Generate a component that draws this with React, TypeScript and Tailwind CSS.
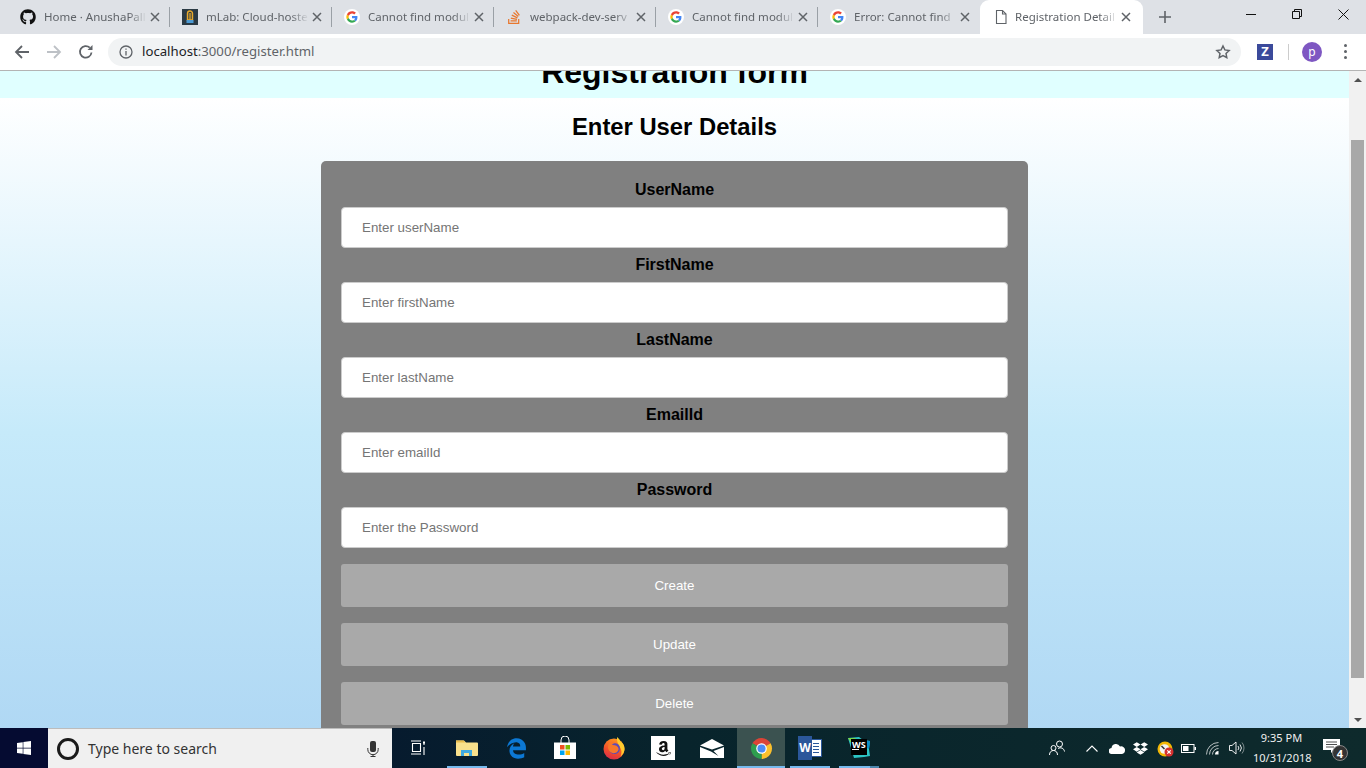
import React from "react";
import { FaGithub, FaStackOverflow, FaWindows, FaAmazon, FaDropbox, FaEdgeLegacy } from "react-icons/fa";

const sans = "font-['Noto_Sans','Open_Sans',sans-serif]";

function GoogleG({ size = 16 }: { size?: number }) {
  return (
    <svg width={size} height={size} viewBox="0 0 48 48">
      <circle cx="24" cy="24" r="24" fill="#fff" />
      <g transform="translate(7 7) scale(0.71)">
        <path fill="#EA4335" d="M24 9.5c3.5 0 6.700 1.200 9.200 3.600l6.900-6.900C35.900 2.400 30.400 0 24 0 14.600 0 6.500 5.400 2.600 13.200l8 6.200C12.500 13.700 17.800 9.500 24 9.500z" />
        <path fill="#4285F4" d="M46.900 24.500c0-1.600-.2-3.100-.4-4.500H24v9h12.900c-.6 3-2.200 5.500-4.700 7.200l7.700 6c4.500-4.200 7-10.300 7-17.700z" />
        <path fill="#FBBC05" d="M10.500 28.600c-.5-1.400-.8-3-.8-4.600s.3-3.200.8-4.600l-8-6.200C.9 16.400 0 20.100 0 24s.9 7.600 2.600 10.800l7.900-6.200z" />
        <path fill="#34A853" d="M24 48c6.500 0 11.900-2.100 15.900-5.800l-7.700-6c-2.200 1.400-4.900 2.300-8.200 2.300-6.200 0-11.500-4.200-13.400-9.900l-8 6.200C6.500 42.600 14.600 48 24 48z" />
      </g>
    </svg>
  );
}

function MLabIcon() {
  return (
    <svg width="16" height="16" viewBox="0 0 16 16">
      <rect width="16" height="16" fill="#2b3a44" />
      <path d="M5.500 11V4.500a2.500 2.500 0 0 1 5 0V11z" fill="none" stroke="#e8a92c" strokeWidth="1.400" />
      <path d="M7.300 4v7M8.700 4v7" stroke="#e8a92c" strokeWidth="0.800" />
      <rect x="4.500" y="11" width="7" height="3" fill="#4c9ad4" />
    </svg>
  );
}

function PageIcon() {
  return (
    <svg width="16" height="16" viewBox="0 0 16 16" fill="none" stroke="#5f6368" strokeWidth="1.100">
      <path d="M3.500 1.500h6l3.500 3.500v9.500h-9.500z" />
      <path d="M9.500 1.500v3.500h3.500" />
    </svg>
  );
}

function CloseX({ color = "#5f6368" }: { color?: string }) {
  return (
    <svg width="10" height="10" viewBox="0 0 10 10" stroke={color} strokeWidth="1.500" fill="none">
      <path d="M1 1l8 8M9 1l-8 8" />
    </svg>
  );
}

const tabs: { icon: React.ReactNode; title: string }[] = [
  { icon: <FaGithub size={16} color="#111" />, title: "Home · AnushaPall" },
  { icon: <MLabIcon />, title: "mLab: Cloud-hoste" },
  { icon: <GoogleG />, title: "Cannot find modul" },
  { icon: <FaStackOverflow size={16} color="#e8772e" />, title: "webpack-dev-serv" },
  { icon: <GoogleG />, title: "Cannot find modul" },
  { icon: <GoogleG />, title: "Error: Cannot find" },
];

function Tab({ icon, title, last }: { icon: React.ReactNode; title: string; last: boolean }) {
  return (
    <div className="flex items-center w-[162px] h-[34px] shrink-0">
      <div className="w-4 h-4 ml-[11px] shrink-0 flex items-center justify-center">{icon}</div>
      <div className={`ml-2 w-[106px] whitespace-nowrap overflow-hidden text-[11.5px] text-[#5f6368] [mask-image:linear-gradient(to_right,black_80%,transparent_97%)] ${sans}`}>
        {title}
      </div>
      <div className="w-[10px] shrink-0 flex items-center">
        <CloseX />
      </div>
      <div className="flex-1" />
      <div className={`w-px h-[20px] mr-[1px] shrink-0 ${last ? "bg-transparent" : "bg-[#9aa0a6]"}`} />
    </div>
  );
}

function TabStrip() {
  return (
    <div className="flex h-[34px] bg-[#dee1e6] shrink-0 items-start">
      <div className="w-[9px] shrink-0" />
      {tabs.map((t, i) => (
        <Tab key={i} icon={t.icon} title={t.title} last={i === tabs.length - 1} />
      ))}
      <div className="w-[163px] h-[34px] -ml-[1px] mt-0 bg-white rounded-t-[9px] flex items-center shrink-0">
        <div className="ml-[13px] w-4 h-4 shrink-0"><PageIcon /></div>
        <div className={`ml-[6px] w-[106px] whitespace-nowrap overflow-hidden text-[11.5px] text-[#5f6368] [mask-image:linear-gradient(to_right,black_80%,transparent_97%)] ${sans}`}>
          Registration Detail
        </div>
        <div><CloseX /></div>
      </div>
      <div className="ml-[16px] h-[34px] flex items-center">
        <svg width="12" height="12" viewBox="0 0 12 12" stroke="#5f6368" strokeWidth="1.600"><path d="M6 0v12M0 6h12" /></svg>
      </div>
      <div className="flex-1" />
      <div className="flex h-[28px] items-center">
        <div className="w-[46px] flex justify-center">
          <svg width="10" height="10" viewBox="0 0 10 10" stroke="#111" strokeWidth="1"><path d="M0 5.500h10" /></svg>
        </div>
        <div className="w-[46px] flex justify-center">
          <svg width="10" height="10" viewBox="0 0 10 10" stroke="#111" strokeWidth="1" fill="none"><path d="M.5 2.500h7v7h-7zM2.500 2.500v-2h7v7h-2" /></svg>
        </div>
        <div className="w-[46px] flex justify-center">
          <svg width="11" height="11" viewBox="0 0 11 11" stroke="#111" strokeWidth="1"><path d="M.5.500l10 10M10.500.500l-10 10" /></svg>
        </div>
      </div>
    </div>
  );
}

function Toolbar() {
  return (
    <div className="flex items-center h-[37px] bg-white border-b border-[#b4b4b4] shrink-0 pb-[1px]">
      <div className="w-[44px] flex justify-center">
        <svg width="16" height="16" viewBox="0 0 16 16" stroke="#5f6368" strokeWidth="1.800" fill="none"><path d="M15 8H2M8 2L2 8l6 6" /></svg>
      </div>
      <div className="w-[20px] flex justify-center">
        <svg width="16" height="16" viewBox="0 0 16 16" stroke="#bdc1c6" strokeWidth="1.800" fill="none"><path d="M1 8h13M8 2l6 6-6 6" /></svg>
      </div>
      <div className="w-[44px] flex justify-center">
        <svg width="16" height="16" viewBox="0 0 16 16" stroke="#5f6368" strokeWidth="1.800" fill="none"><path d="M13.500 8.500A5.800 5.800 0 1 1 11.800 3.700" /><path d="M14.500 1v5h-5" fill="#5f6368" stroke="none" /></svg>
      </div>
      <div className="w-[1133px] h-[28px] bg-[#f1f3f4] rounded-full flex items-center">
        <div className="ml-[11px] w-[14px] h-[14px]">
          <svg width="14" height="14" viewBox="0 0 14 14" fill="none" stroke="#5f6368" strokeWidth="1.300"><circle cx="7" cy="7" r="6" /><path d="M7 6v4.500M7 3.500v1.300" /></svg>
        </div>
        <div className={`ml-[9px] text-[13.2px] leading-none whitespace-nowrap ${sans}`}>
          <span className="text-[#202124]">localhost</span><span className="text-[#5f6368]">:3000/register.html</span>
        </div>
        <div className="flex-1" />
        <div className="mr-[10px]">
          <svg width="16" height="16" viewBox="0 0 24 24" fill="none" stroke="#5f6368" strokeWidth="2.200"><path d="M12 3l2.800 5.900 6.400.8-4.700 4.400 1.200 6.400-5.700-3.200-5.700 3.200 1.200-6.400-4.700-4.400 6.400-.8z" /></svg>
        </div>
      </div>
      <div className={`ml-[16px] w-4 h-4 bg-[#3b4a9b] flex items-center justify-center text-white text-[13px] font-bold leading-none ${sans}`}>Z</div>
      <div className="ml-[15px] w-px h-[16px] bg-[#ccc]" />
      <div className={`ml-[13px] w-5 h-5 rounded-full bg-[#7e57c2] flex items-center justify-center text-white text-[12px] leading-none ${sans}`}>p</div>
      <div className="ml-[22px] flex flex-col gap-[3px]">
        <div className="w-[3px] h-[3px] rounded-full bg-[#5f6368]" />
        <div className="w-[3px] h-[3px] rounded-full bg-[#5f6368]" />
        <div className="w-[3px] h-[3px] rounded-full bg-[#5f6368]" />
      </div>
    </div>
  );
}

function Field({ label, ph }: { label: string; ph: string }) {
  return (
    <div className="flex flex-col">
      <label className="h-[18px] mb-[8px] text-center text-[16px] leading-[18px] font-bold text-black">{label}</label>
      <input
        readOnly
        placeholder={ph}
        className="h-[41px] mb-[8px] w-full bg-white border border-[#ccc] rounded-[4px] pl-[20px] text-[13.33px] placeholder:text-[#757575] outline-none"
      />
    </div>
  );
}

function Form() {
  return (
    <div className="flex-1 min-w-0 h-full overflow-hidden font-['Liberation_Sans',Arial,sans-serif] bg-gradient-to-b from-white from-[4%] via-[#c6eafa] via-[55%] to-[#b0d8f4]">
      <div className="h-[27px] bg-[#e0ffff] flex items-end justify-center pb-[7px]">
        <h1 className="text-[32px] leading-[37px] font-bold text-black whitespace-nowrap shrink-0">Registration form</h1>
      </div>
      <h2 className="mt-[15px] h-[28px] text-center text-[23.8px] leading-[28px] font-bold text-black">Enter User Details</h2>
      <div className="mx-auto mt-[20px] w-[707px] bg-[#808080] rounded-[5px] px-5 pt-[20px] pb-5">
        <Field label="UserName" ph="Enter userName" />
        <Field label="FirstName" ph="Enter firstName" />
        <Field label="LastName" ph="Enter lastName" />
        <Field label="EmailId" ph="Enter emailId" />
        <Field label="Password" ph="Enter the Password" />
        <div className="mt-[8px] flex flex-col gap-4">
          {["Create", "Update", "Delete"].map((b) => (
            <button key={b} className="h-[43px] w-full bg-[#a9a9a9] rounded-[3px] text-white text-[13.33px] font-normal">
              {b}
            </button>
          ))}
        </div>
      </div>
    </div>
  );
}

function Scrollbar() {
  return (
    <div className="w-[17px] h-full bg-[#f1f1f1] flex flex-col items-center shrink-0">
      <div className="h-[17px] flex items-center justify-center shrink-0">
        <div className="w-0 h-0 border-x-[4px] border-x-transparent border-b-[4px] border-b-[#505050]" />
      </div>
      <div className="mt-[52px] w-[13px] h-[538px] bg-[#a8a8a8] shrink-0" />
      <div className="flex-1" />
      <div className="h-[17px] flex items-center justify-center shrink-0">
        <div className="w-0 h-0 border-x-[4px] border-x-transparent border-t-[4px] border-t-[#505050]" />
      </div>
    </div>
  );
}

function Slot({ children, active, bar, extra }: { children: React.ReactNode; active?: boolean; bar?: boolean; extra?: boolean }) {
  return (
    <div className={`relative w-[48px] h-[40px] flex items-center justify-center shrink-0 ${active ? "bg-[#3b5250]" : ""}`}>
      {children}
      {bar && <div className={`absolute bottom-0 h-[2px] bg-[#76b9ed] ${active ? "left-0 right-0" : "left-[4px] right-[4px]"}`} />}
      {extra && <div className="absolute bottom-0 right-[4px] w-[9px] h-[2px] bg-[#4c86ad]" />}
    </div>
  );
}

function Firefox() {
  return (
    <svg width="24" height="24" viewBox="0 0 24 24">
      <defs>
        <linearGradient id="ffx" x1="0.7" y1="0" x2="0.3" y2="1">
          <stop offset="0" stopColor="#ff9a1f" />
          <stop offset="0.6" stopColor="#f2502a" />
          <stop offset="1" stopColor="#d92b4a" />
        </linearGradient>
      </defs>
      <circle cx="12" cy="13" r="10.500" fill="url(#ffx)" />
      <path d="M15 1c2 1.500 3 3 3.500 4.500C21 7.500 23 10 22.500 14c-.5 3-2 5-4 6.500 1.500-3 1.500-7-1-10C16 8 14.500 5 15 1z" fill="#ffcb2e" />
      <circle cx="12.500" cy="12.500" r="5.500" fill="#5b4bb8" />
      <path d="M7 7c2-1.500 5-1.500 7 0-2 0-3.500.8-4 2 2.500-.3 6 .5 6.500 3.500.4 3-3 5.500-6 4.500C8 16.500 6 14 6 11.500c0-1.700.4-3.300 1-4.500z" fill="#f7782a" />
    </svg>
  );
}

function Taskbar() {
  return (
    <div className="h-[40px] shrink-0 flex items-center text-white bg-gradient-to-r from-[#060c30] via-[#08242c] to-[#0e2a2c]">
      <div className="w-[48px] h-full flex items-center justify-center bg-[#050b31]">
        <FaWindows size={16} color="#fff" />
      </div>
      <div className="w-[344px] h-full bg-[#f0f0f0] border-t border-[#bcbcbc] flex items-center">
        <div className="ml-[9px] w-[22px] h-[22px] rounded-full border-[3px] border-[#1a1a1a]" />
        <div className={`ml-[9px] text-[14px] text-[#333] whitespace-nowrap ${sans}`}>Type here to search</div>
        <div className="flex-1" />
        <svg className="mr-[13px]" width="12" height="16" viewBox="0 0 12 16" fill="none">
          <rect x="3" y="0" width="6" height="11" rx="2" fill="#333" />
          <path d="M.8 7v1.500a5.200 5.200 0 0 0 10.400 0V7M6 13.500V16M3.500 15.500h5" stroke="#333" strokeWidth="1" />
        </svg>
      </div>
      <div className="ml-[2px] flex gap-px">
        <Slot>
          <svg width="16" height="16" viewBox="0 0 16 16" fill="none" stroke="#fff" strokeWidth="1.100">
            <path d="M1 1h10M1 14h10M2.500 3.500h8v8h-8zM14 3v2M14 7v8" />
            <rect x="13" y="1.500" width="2" height="2" fill="#fff" stroke="none" />
          </svg>
        </Slot>
        <Slot bar>
          <svg width="22" height="20" viewBox="0 0 22 20">
            <path d="M0 2.500h8l2 2h11a1 1 0 0 1 1 1V17a1 1 0 0 1-1 1H1a1 1 0 0 1-1-1z" fill="#f9e08c" />
            <path d="M0 2.500h7.500l2 2H0z" fill="#e9bc4c" />
            <path d="M5 18v-6h11v6h-3v-3H8v3z" fill="#3fa9e0" />
          </svg>
        </Slot>
        <Slot>
          <FaEdgeLegacy size={21} color="#0c78d4" />
        </Slot>
        <Slot>
          <svg width="24" height="24" viewBox="0 0 24 24">
            <path d="M8 7V4a4 4 0 0 1 8 0v3" fill="none" stroke="#fff" strokeWidth="1" />
            <path d="M1 6.500h22V23H1z" fill="#fff" />
            <rect x="7" y="9" width="4.500" height="4.500" fill="#f25022" />
            <rect x="12.500" y="9" width="4.500" height="4.500" fill="#7fba00" />
            <rect x="7" y="14.500" width="4.500" height="4.500" fill="#00a4ef" />
            <rect x="12.500" y="14.500" width="4.500" height="4.500" fill="#ffb900" />
          </svg>
        </Slot>
        <Slot>
          <Firefox />
        </Slot>
        <Slot>
          <div className="w-6 h-6 bg-white flex items-center justify-center">
            <FaAmazon size={17} color="#111" />
          </div>
        </Slot>
        <Slot>
          <svg width="24" height="19" viewBox="0 0 24 19">
            <path d="M0 6.500L12 0l12 6.500-12 4z" fill="#fff" />
            <path d="M0 8v11h24V8L13.500 12l5 5L11 12.500z" fill="#fff" />
          </svg>
        </Slot>
        <Slot active bar>
          <svg width="23" height="23" viewBox="0 0 48 48">
            <path d="M24 24L5 13A22 22 0 0 1 43 13z" fill="#db4437" />
            <path d="M24 24L43 13A22 22 0 0 1 24 46z" fill="#fbc02d" />
            <path d="M24 24L24 46A22 22 0 0 1 5 13z" fill="#2e9e4f" />
            <circle cx="24" cy="24" r="11" fill="#fff" />
            <circle cx="24" cy="24" r="8.500" fill="#4c8bf5" />
          </svg>
        </Slot>
        <Slot bar>
          <div className="relative w-6 h-6">
            <div className="absolute left-[8px] top-[3px] w-[16px] h-[18px] bg-white border border-[#2b579a] flex flex-col justify-center gap-[2px] pl-[6px] pr-[2px]">
              <div className="h-px bg-[#2b579a]" /><div className="h-px bg-[#2b579a]" /><div className="h-px bg-[#2b579a]" /><div className="h-px bg-[#2b579a]" />
            </div>
            <div className={`absolute left-0 top-0 w-[14px] h-[24px] bg-[#2b579a] flex items-center justify-center text-[12px] font-bold leading-none ${sans}`}>W</div>
          </div>
        </Slot>
        <Slot bar extra>
          <div className="relative w-6 h-6">
            <svg className="absolute inset-0" width="24" height="24" viewBox="0 0 24 24">
              <path d="M1 2l11-1 4 3 7 1-1 8 1 7-6 1-10 1z" fill="#2dc4c4" />
              <path d="M16 4l7 1-1 8-4-2z" fill="#0d8ec9" />
              <path d="M1 2l8 0-5 5z" fill="#7bd648" />
            </svg>
            <div className="absolute left-[4px] top-[3px] w-[16px] h-[16px] bg-black text-white text-[9px] font-bold leading-[11px] pl-[1px]">WS
              <div className="mt-[-1px] w-[7px] h-px bg-white" />
            </div>
          </div>
        </Slot>
      </div>
      <div className="flex-1" />
      <div className="flex items-center h-full">
        <svg className="mr-[21px]" width="16" height="16" viewBox="0 0 16 16" fill="none" stroke="#fff" strokeWidth="1">
          <circle cx="10.500" cy="4" r="3" /><circle cx="4.500" cy="8" r="2.500" /><path d="M.5 15c0-3 1.800-4.500 4-4.500s4 1.500 4 4.500M9 8.500c2.500-1.500 6-.5 6.500 3" />
        </svg>
        <svg className="mr-[11px]" width="12" height="7" viewBox="0 0 12 7" fill="none" stroke="#fff" strokeWidth="1.100"><path d="M.5 6.500L6 1l5.500 5.500" /></svg>
        <svg className="mr-[8px]" width="16" height="11" viewBox="0 0 16 11" fill="#fff"><path d="M3 11a3 3 0 0 1-.5-6A4.500 4.500 0 0 1 11 3.500 3.800 3.800 0 0 1 16 7.500 3.500 3.500 0 0 1 13 11z" /></svg>
        <div className="mr-[9px]"><FaDropbox size={15} color="#fff" /></div>
        <svg className="mr-[7px]" width="17" height="17" viewBox="0 0 17 17">
          <circle cx="8" cy="9" r="7.500" fill="#f2b705" />
          <circle cx="7.500" cy="9" r="4.800" fill="#f4f4f4" />
          <path d="M7.500 9l-3-3" stroke="#333" strokeWidth="1.500" />
          <circle cx="12" cy="12" r="4.500" fill="#d3302f" />
          <path d="M10.300 10.300l3.400 3.400M13.700 10.300l-3.400 3.400" stroke="#fff" strokeWidth="1.200" />
        </svg>
        <svg className="mr-[10px]" width="15" height="9" viewBox="0 0 15 9" fill="none">
          <rect x=".5" y=".5" width="12.500" height="8" stroke="#fff" /><rect x="2" y="2" width="5.500" height="5" fill="#fff" /><rect x="13.500" y="3" width="1.500" height="3" fill="#fff" />
        </svg>
        <svg className="mr-[8px]" width="15" height="13" viewBox="0 0 15 13" fill="none" stroke="#fff" strokeWidth="1">
          <path d="M.5 12.500A12 12 0 0 1 12.500.500M3.500 12.500a9 9 0 0 1 9-9M6.500 12.500a6 6 0 0 1 6-6" opacity="0.7" />
          <path d="M9 12.500a3.500 3.500 0 0 1 3.500-3.500v3.500z" fill="#fff" stroke="none" />
        </svg>
        <svg className="mr-[8px]" width="16" height="14" viewBox="0 0 16 14" fill="none" stroke="#fff" strokeWidth="0.900">
          <path d="M.5 4.500h2.500L7 1v12L3 9.500H.5z" /><path d="M9 5a3 3 0 0 1 0 4M11 3.500a5.500 5.500 0 0 1 0 7" /><path d="M13 1.500a8.500 8.500 0 0 1 0 11" opacity="0.5" />
        </svg>
        <div className={`w-[57px] text-center text-[11px] leading-[20px] text-[#f0f0f0] whitespace-nowrap ${sans}`}>
          <div>9:35 PM</div>
          <div>10/31/2018</div>
        </div>
        <div className="relative ml-[13px] mr-[25px] w-[18px] h-[18px]">
          <svg width="17" height="15" viewBox="0 0 17 15"><path d="M0 0h17v11h-6l-3 3v-3H0z" fill="#fff" /><path d="M3 3h11M3 5.500h11M3 8h8" stroke="#222" strokeWidth="0.800" /></svg>
          <div className={`absolute -right-[7px] -bottom-[4px] w-4 h-4 rounded-full bg-[#333] border border-[#888] flex items-center justify-center text-[11px] font-bold leading-none text-white ${sans}`}>4</div>
        </div>
      </div>
    </div>
  );
}

export default function App() {
  return (
    <div className="w-[1366px] h-[768px] overflow-hidden flex flex-col bg-white">
      <TabStrip />
      <Toolbar />
      <div className="h-[657px] flex overflow-hidden shrink-0">
        <Form />
        <Scrollbar />
      </div>
      <Taskbar />
    </div>
  );
}
